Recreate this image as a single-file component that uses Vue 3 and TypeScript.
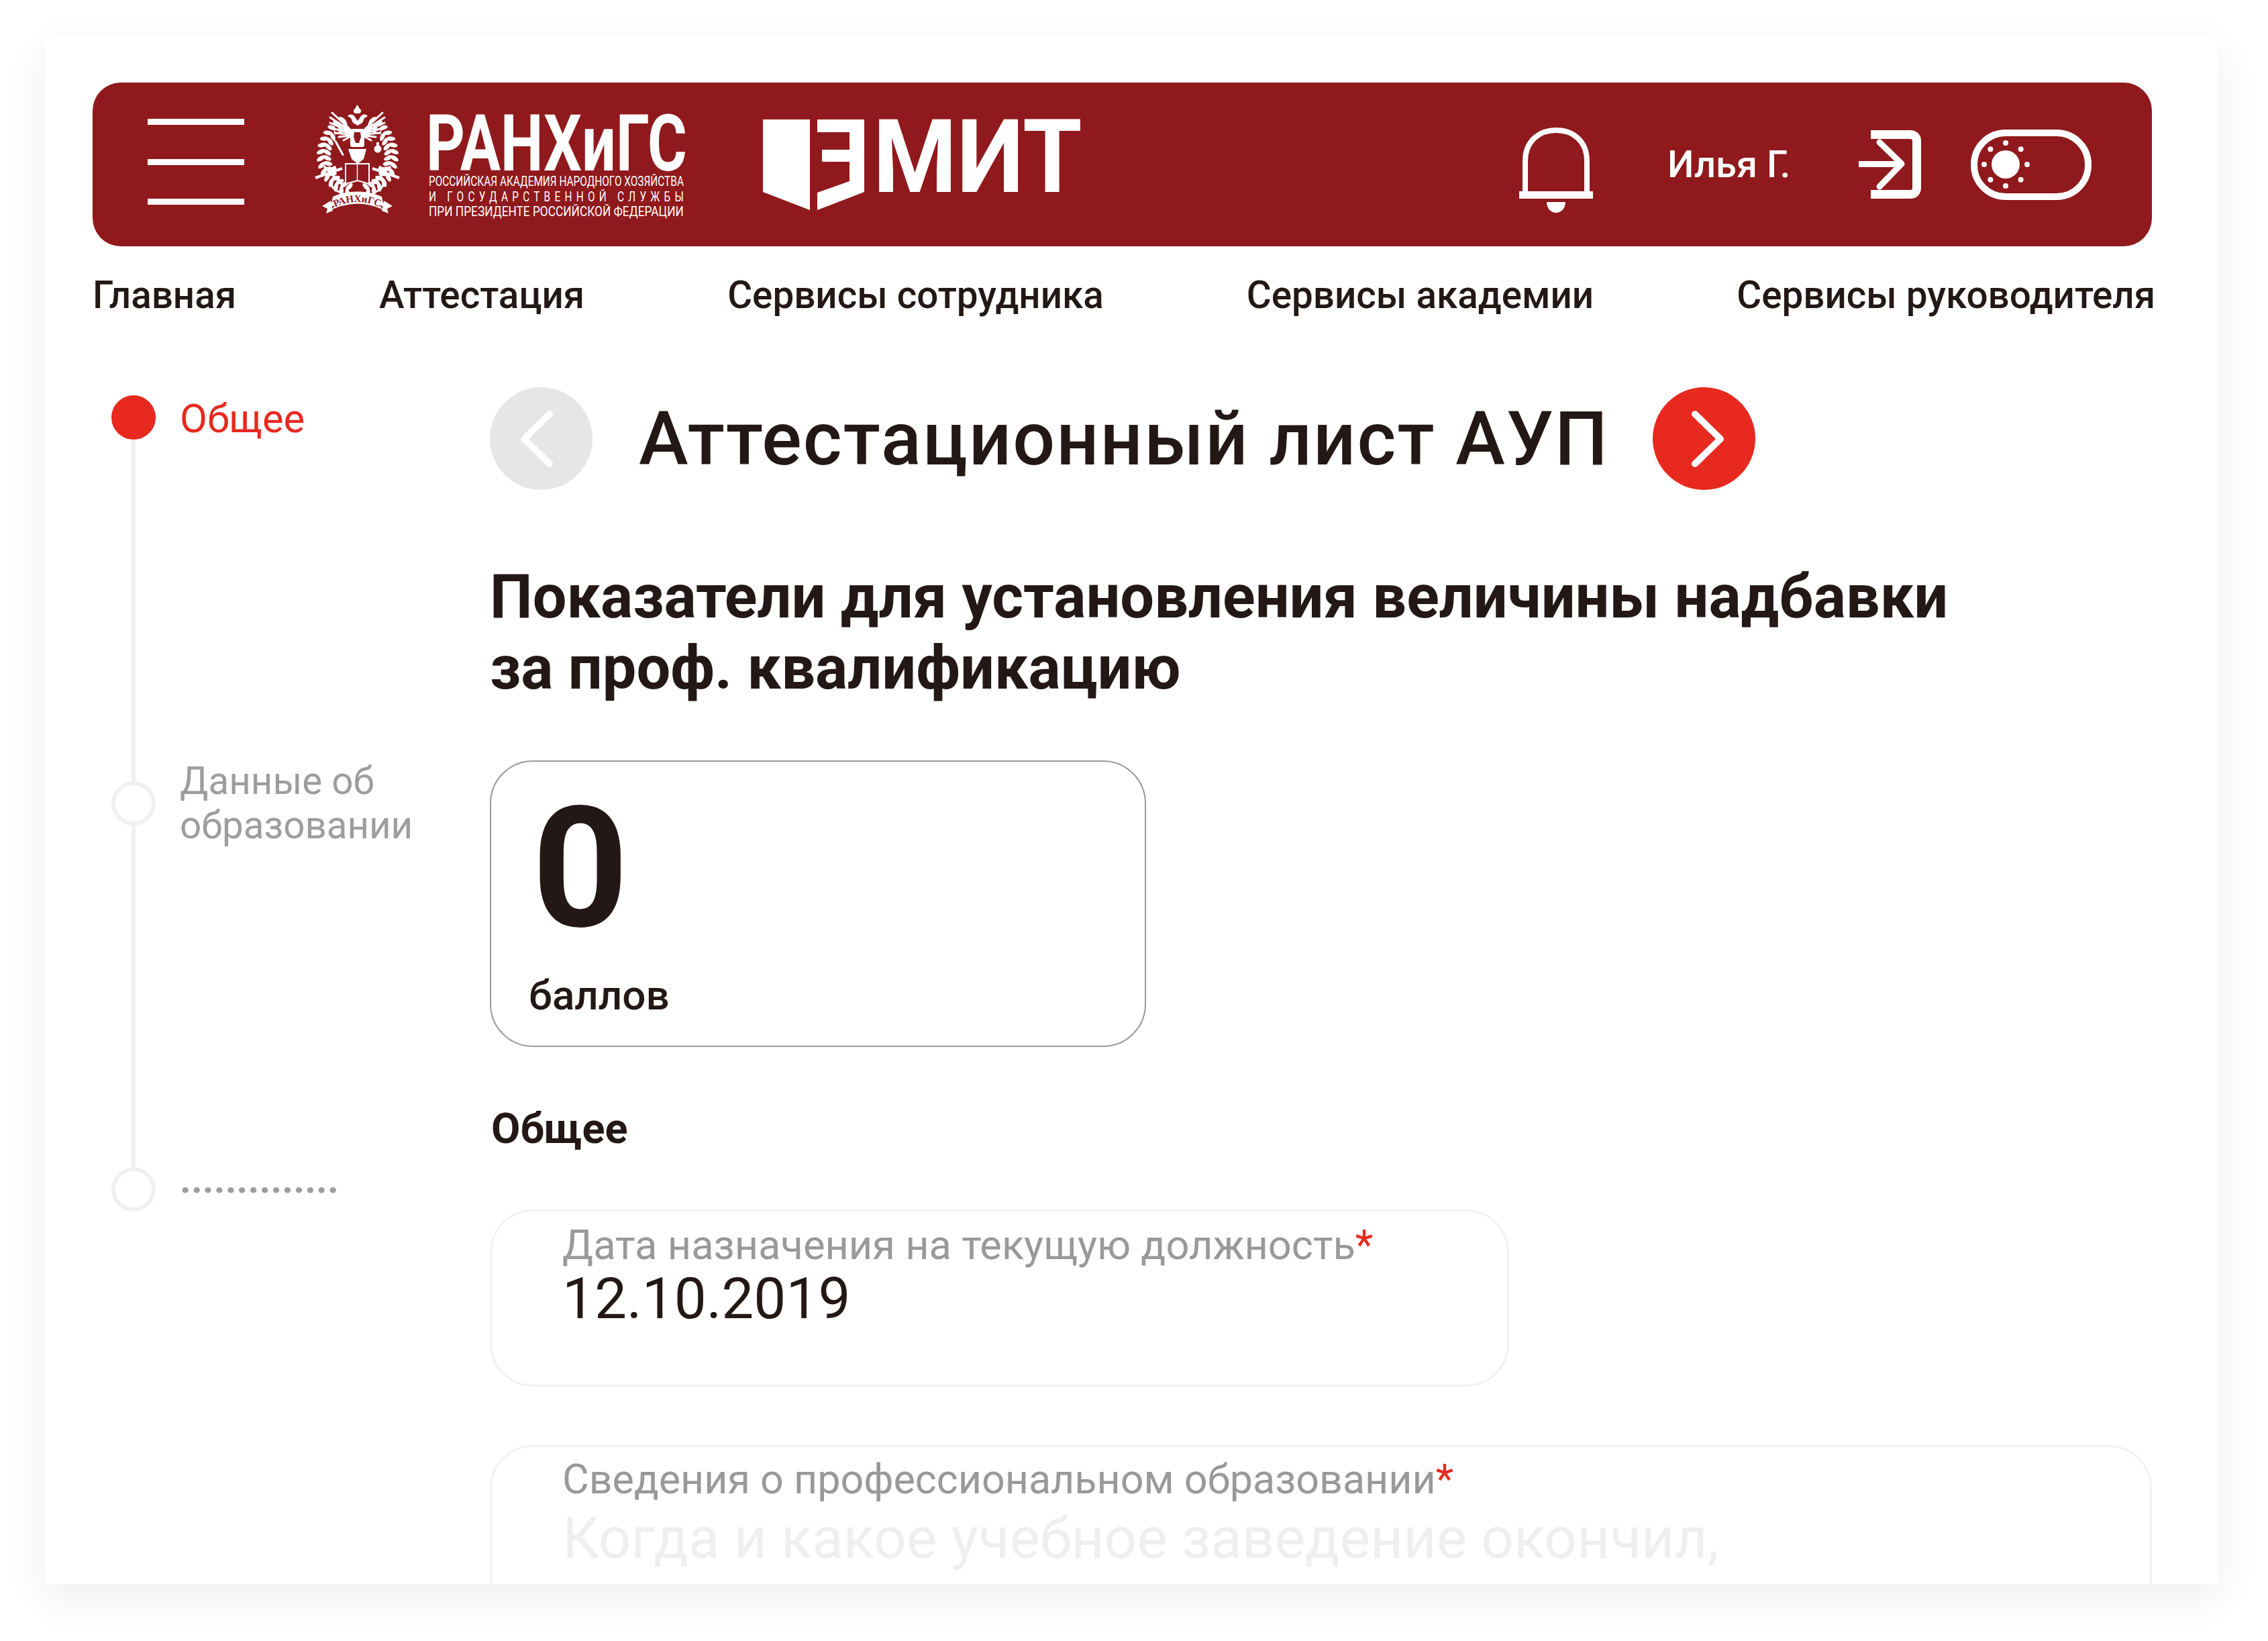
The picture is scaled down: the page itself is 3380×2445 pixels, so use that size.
<script setup lang="ts">
const navItems: string[] = ['Главная', 'Аттестация', 'Сервисы сотрудника', 'Сервисы академии', 'Сервисы руководителя']

interface Leaf { x: number; y: number; r: number }
const leaves: Leaf[] = []
for (let side = -1; side <= 1; side += 2) {
  for (let a = 24; a <= 168; a += 10) {
    const rad = (a * Math.PI) / 180
    for (const k of [0.83, 1.0]) {
      const kx = 55 * k
      const ky = 58 * k
      leaves.push({
        x: 64 + side * kx * Math.sin(rad),
        y: 76 - ky * Math.cos(rad),
        r: side * (a + (k > 0.9 ? 28 : -28)),
      })
    }
  }
}

const wingEnds: number[][] = [
  [26, 12], [23, 19], [23, 27], [26, 35], [30, 42], [36, 48], [43, 53],
]

const sunDots: { x: number; y: number }[] = Array.from({ length: 8 }, (_, i) => ({
  x: 52 + 32 * Math.cos((i * Math.PI) / 4),
  y: 52 + 32 * Math.sin((i * Math.PI) / 4),
}))
</script>

<template>
  <div class="page">
    <div class="card">
      <header class="bar">
        <button class="burger" aria-label="Меню"><i></i><i></i><i></i></button>

        <svg class="crest" viewBox="0 0 128 165" aria-hidden="true">
          <defs>
            <path id="ribbon-arc" d="M29 153Q63 137 98 153" />
          </defs>
          <g fill="#fff">
            <ellipse v-for="(l, i) in leaves" :key="i" :cx="l.x" :cy="l.y" rx="3.2" ry="6.8"
              :transform="`rotate(${l.r} ${l.x} ${l.y})`" />
          </g>
          <path d="M30 30c9 20 22 38 34 40 12-2 25-20 34-40l-2 56-32 30-32-30z" fill="#8f191c" />
          <g stroke="#fff" stroke-width="3" stroke-linecap="round" fill="none">
            <path v-for="(w, i) in wingEnds" :key="'l' + i" :d="`M52 ${36 + i * 2}L${w[0]} ${w[1]}`" />
            <path v-for="(w, i) in wingEnds" :key="'r' + i" :d="`M75 ${36 + i * 2}L${127 - w[0]} ${w[1]}`" />
          </g>
          <g fill="#fff">
            <path d="M63.500 0l3 5 3 4-2 4h-8l-2-4 3-4z" />
            <path d="M49 17c4-4 9-3 12 3l3 4 3-4c3-6 8-7 12-3l-5 3-3 7-7 4-7-4-3-7z" />
            <rect x="53" y="36" width="21" height="27" rx="3" />
            <path d="M50 66h27l-4 15-9 7-9-7z" />
            <circle cx="94" cy="66" r="5.500" />
            <path d="M92 56h4v6h-4zM29 54l3-1 12 22-3 1z" />
          </g>
          <path d="M59 41h9l1 7-3 9h-5l-3-9z" fill="#8f191c" />
          <path d="M46 88h35v30l-17-5-18 5z" fill="#8f191c" stroke="#fff" stroke-width="2" />
          <path d="M63.500 88v25" stroke="#fff" stroke-width="1.500" />
          <g stroke="#fff" fill="none">
            <path d="M1 109l40-14M126 109L86 95" stroke-width="4" />
            <path d="M14 92l30 30M113 92l-30 30" stroke-width="3.500" />
            <path d="M42 116c-6-8-17-6-17 2 0 7 8 10 15 14M85 116c6-8 17-6 17 2 0 7-8 10-15 14" stroke-width="3" />
            <path d="M20 100l12-6M107 100l-12-6" stroke-width="7" />
          </g>
          <path d="M31 148q33-15 65 0l5 8q-37-17-75 0z" fill="#fff" />
          <path d="M27 137c22-10 51-10 73 0l3 15c-25-11-53-11-79 0z" fill="#fff" />
          <path d="M24 143L11 151l8 4-2 7 10-4zM103 143l13 8-8 4 2 7-10-4z" fill="#fff" />
          <text class="crest-text" text-anchor="middle"><textPath href="#ribbon-arc" startOffset="50%">РАНХиГС</textPath></text>
        </svg>

        <div class="ranepa">
          <div class="ranepa-name"><span>РАНХиГС</span></div>
          <div class="ranepa-sub"><span>РОССИЙСКАЯ АКАДЕМИЯ НАРОДНОГО ХОЗЯЙСТВА</span></div>
          <div class="ranepa-sub wide"><span>И ГОСУДАРСТВЕННОЙ СЛУЖБЫ</span></div>
          <div class="ranepa-sub third"><span>ПРИ ПРЕЗИДЕНТЕ РОССИЙСКОЙ ФЕДЕРАЦИИ</span></div>
        </div>

        <div class="emit">
          <svg class="emit-mark" viewBox="0 0 151 135" aria-hidden="true">
            <path d="M0 0h70v135L0 108z" fill="#fff" />
            <path d="M81 0h70v108l-70 27v-26l48-17V63H88V45h41V19H81z" fill="#fff" />
          </svg>
          <div class="emit-word"><span>МИТ</span></div>
        </div>

        <div class="tools">
          <svg class="bell" viewBox="0 0 110 127" aria-hidden="true">
            <path d="M9 100V50C9 20 30 4 55 4s46 16 46 46v50" fill="none" stroke="#fff" stroke-width="8" />
            <rect x="0" y="95" width="110" height="11" fill="#fff" />
            <path d="M41 111h28c0 9-6 16-14 16s-14-7-14-16z" fill="#fff" />
          </svg>
          <span class="user">Илья Г.</span>
          <svg class="exit" viewBox="0 0 93 102" aria-hidden="true">
            <path d="M18 6.500h58q10.500 0 10.500 10v69q0 10-10.500 10H18" fill="none" stroke="#fff" stroke-width="13" />
            <path d="M0 50.500h63M31 18l33 32-33 34" fill="none" stroke="#fff" stroke-width="9" stroke-linecap="round" stroke-linejoin="round" />
          </svg>
          <svg class="toggle" viewBox="0 0 180 105" aria-hidden="true">
            <rect x="5" y="5" width="170" height="95" rx="47" fill="none" stroke="#fff" stroke-width="10" />
            <circle cx="52" cy="52" r="21" fill="#fff" />
            <circle v-for="(d, i) in sunDots" :key="i" :cx="d.x" :cy="d.y" r="4" fill="#fff" />
          </svg>
        </div>
      </header>

      <nav class="nav">
        <a v-for="item in navItems" :key="item">{{ item }}</a>
      </nav>

      <div class="body">
        <aside class="steps">
          <div class="step">
            <div class="rail"><span class="dot active"></span><span class="line"></span></div>
            <div class="step-label active">Общее</div>
          </div>
          <div class="step">
            <div class="rail"><span class="dot"></span><span class="line"></span></div>
            <div class="step-label two">Данные об<br />образовании</div>
          </div>
          <div class="step last">
            <div class="rail"><span class="dot"></span></div>
            <div class="step-label dots">..............</div>
          </div>
        </aside>

        <main class="main">
          <div class="title-row">
            <button class="round prev" aria-label="Назад">
              <svg viewBox="0 0 50 86"><path d="M44 6L6 43l38 37" fill="none" stroke="#fff" stroke-width="10" stroke-linecap="round" stroke-linejoin="round" /></svg>
            </button>
            <h1>Аттестационный лист АУП</h1>
            <button class="round next" aria-label="Вперёд">
              <svg viewBox="0 0 50 86"><path d="M6 6l38 37L6 80" fill="none" stroke="#fff" stroke-width="10" stroke-linecap="round" stroke-linejoin="round" /></svg>
            </button>
          </div>

          <h2>Показатели для установления величины надбавки<br />за проф. квалификацию</h2>

          <section class="score">
            <div class="score-num">0</div>
            <div class="score-cap">баллов</div>
          </section>

          <h3>Общее</h3>

          <div class="field short">
            <div class="field-label">Дата назначения на текущую должность<em>*</em></div>
            <div class="field-value">12.10.2019</div>
          </div>

          <div class="field full">
            <div class="field-label">Сведения о профессиональном образовании<em>*</em></div>
            <div class="field-value ghost">Когда и какое учебное заведение окончил,</div>
          </div>
        </main>
      </div>
    </div>
  </div>
</template>

<style scoped>
.page {
  height: 2445px;
  padding: 55px 75px 0 67px;
  box-sizing: border-box;
  overflow: hidden;
  font-family: Roboto, "Noto Sans", sans-serif;
  color: #231815;
}
.card {
  height: 2305px;
  padding: 68px 98px 0 71px;
  box-sizing: border-box;
  overflow: hidden;
  background: #fff;
  box-shadow: 0 20px 60px rgba(0, 0, 0, 0.07);
}
.bar {
  height: 244px;
  display: flex;
  align-items: center;
  padding: 0 90px 0 82px;
  background: #8f191c;
  border-radius: 42px;
  color: #fff;
}
.burger {
  width: 144px;
  height: 128px;
  margin-bottom: 8px;
  padding: 0;
  border: 0;
  background: none;
  display: flex;
  flex-direction: column;
  justify-content: space-between;
  flex: none;
}
.burger i {
  display: block;
  height: 9px;
  background: #fff;
}
.crest {
  width: 128px;
  height: 165px;
  margin: 0 0 13px 105px;
  flex: none;
}
.crest-text {
  font-family: "Liberation Serif", serif;
  font-size: 15px;
  font-weight: 700;
  fill: #8f191c;
}
.ranepa {
  width: 382px;
  margin-left: 42px;
  flex: none;
  white-space: nowrap;
}
.ranepa span {
  display: inline-block;
  transform-origin: left center;
}
.ranepa-name {
  font-size: 116px;
  line-height: 102px;
  font-weight: 700;
  height: 96px;
  margin-left: -4px;
}
.ranepa-name span {
  transform: scaleX(0.774);
}
.ranepa-sub {
  font-size: 20px;
  line-height: 22.500px;
  height: 22.500px;
}
.ranepa-sub span {
  transform: scaleX(0.77);
}
.ranepa-sub.wide span {
  letter-spacing: 8.100px;
}
.ranepa-sub.third span {
  transform: scaleX(0.864);
}
.emit {
  display: flex;
  align-items: flex-start;
  margin-left: 116px;
  width: 472px;
  height: 135px;
  flex: none;
}
.emit-mark {
  width: 151px;
  height: 135px;
  flex: none;
}
.emit-word {
  margin-left: 13px;
  font-size: 152px;
  line-height: 112px;
  height: 108px;
  font-weight: 700;
  white-space: nowrap;
}
.emit-word span {
  display: inline-block;
  transform: scaleX(0.94);
  transform-origin: left center;
}
.tools {
  margin-left: auto;
  display: flex;
  align-items: center;
}
.bell {
  width: 110px;
  height: 127px;
  margin-top: 16px;
}
.user {
  margin-left: 111px;
  width: 182px;
  font-size: 56px;
  line-height: 66px;
  font-weight: 500;
  white-space: nowrap;
}
.exit {
  width: 93px;
  height: 102px;
  margin-left: 103px;
}
.toggle {
  width: 180px;
  height: 105px;
  margin-left: 74px;
}
.nav {
  display: flex;
  gap: 213px;
  margin-top: 40px;
  font-size: 56.600px;
  line-height: 66px;
  font-weight: 500;
  white-space: nowrap;
}
.body {
  display: flex;
  margin-top: 104px;
}
.steps {
  width: 592px;
  padding: 12px 0 0 27px;
  box-sizing: border-box;
  flex: none;
}
.step {
  display: flex;
  height: 575px;
}
.step.last {
  height: 70px;
}
.rail {
  width: 68px;
  display: flex;
  flex-direction: column;
  align-items: center;
  flex: none;
}
.dot {
  width: 66px;
  height: 66px;
  border-radius: 50%;
  border: 6px solid #f0f0f0;
  box-sizing: border-box;
  flex: none;
}
.dot.active {
  background: #e8291f;
  border-color: #e8291f;
}
.line {
  width: 6px;
  flex: 1;
  background: #f0f0f0;
}
.step-label {
  margin-left: 35px;
  font-size: 56.500px;
  line-height: 66px;
  color: #9d9d9d;
  white-space: nowrap;
}
.step-label.active {
  color: #e8291f;
  font-size: 59.500px;
  margin-top: 2px;
}
.step-label.two {
  margin-top: -33px;
}
.step-label.dots {
  margin-top: -15px;
  font-size: 58px;
  font-weight: 700;
  letter-spacing: 0.100px;
}
.main {
  flex: 1;
  min-width: 0;
}
.title-row {
  display: flex;
  align-items: center;
  height: 153px;
}
.round {
  width: 153px;
  height: 153px;
  padding: 0;
  border: 0;
  border-radius: 50%;
  display: flex;
  align-items: center;
  justify-content: center;
  flex: none;
}
.round svg {
  width: 50px;
  height: 86px;
}
.prev {
  background: #e6e6e6;
}
.prev svg {
  margin-right: 14px;
}
.next {
  background: #e8291f;
}
.next svg {
  margin-left: 12px;
}
h1 {
  margin: 0 65px 0 69px;
  font-size: 111px;
  line-height: 140px;
  font-weight: 500;
  letter-spacing: 2.050px;
  white-space: nowrap;
}
h2 {
  margin: 107px 0 0;
  font-size: 90px;
  line-height: 106px;
  font-weight: 700;
  white-space: nowrap;
}
.score {
  width: 978px;
  height: 427px;
  margin-top: 84px;
  padding: 35px 0 0 56px;
  box-sizing: border-box;
  border: 2px solid #999;
  border-radius: 64px;
}
.score-num {
  margin-left: 5px;
  font-size: 250px;
  line-height: 250px;
  font-weight: 700;
}
.score-cap {
  margin-top: 28px;
  font-size: 62px;
  line-height: 70px;
  font-weight: 500;
}
h3 {
  margin: 87px 0 0 2px;
  font-size: 63px;
  line-height: 70px;
  font-weight: 700;
}
.field {
  padding: 15px 0 0 105px;
  box-sizing: border-box;
  border: 3px solid #f2f2f2;
  border-radius: 64px;
  background: #fff;
  white-space: nowrap;
}
.field.short {
  width: 1519px;
  height: 264px;
  margin-top: 85px;
}
.field.short .field-label {
  font-size: 61.400px;
}
.field.full {
  height: 340px;
  margin-top: 87px;
  padding-top: 13px;
}
.field-label {
  font-size: 61px;
  line-height: 70px;
  color: #999;
}
.field-label em {
  font-style: normal;
  color: #e8291f;
}
.field-value {
  font-size: 85.500px;
  line-height: 90px;
  color: #231815;
}
.field-value.ghost {
  margin-top: 8px;
  color: #efefef;
}
</style>

<style>
html,
body {
  margin: 0;
  background: #fff;
}
</style>
